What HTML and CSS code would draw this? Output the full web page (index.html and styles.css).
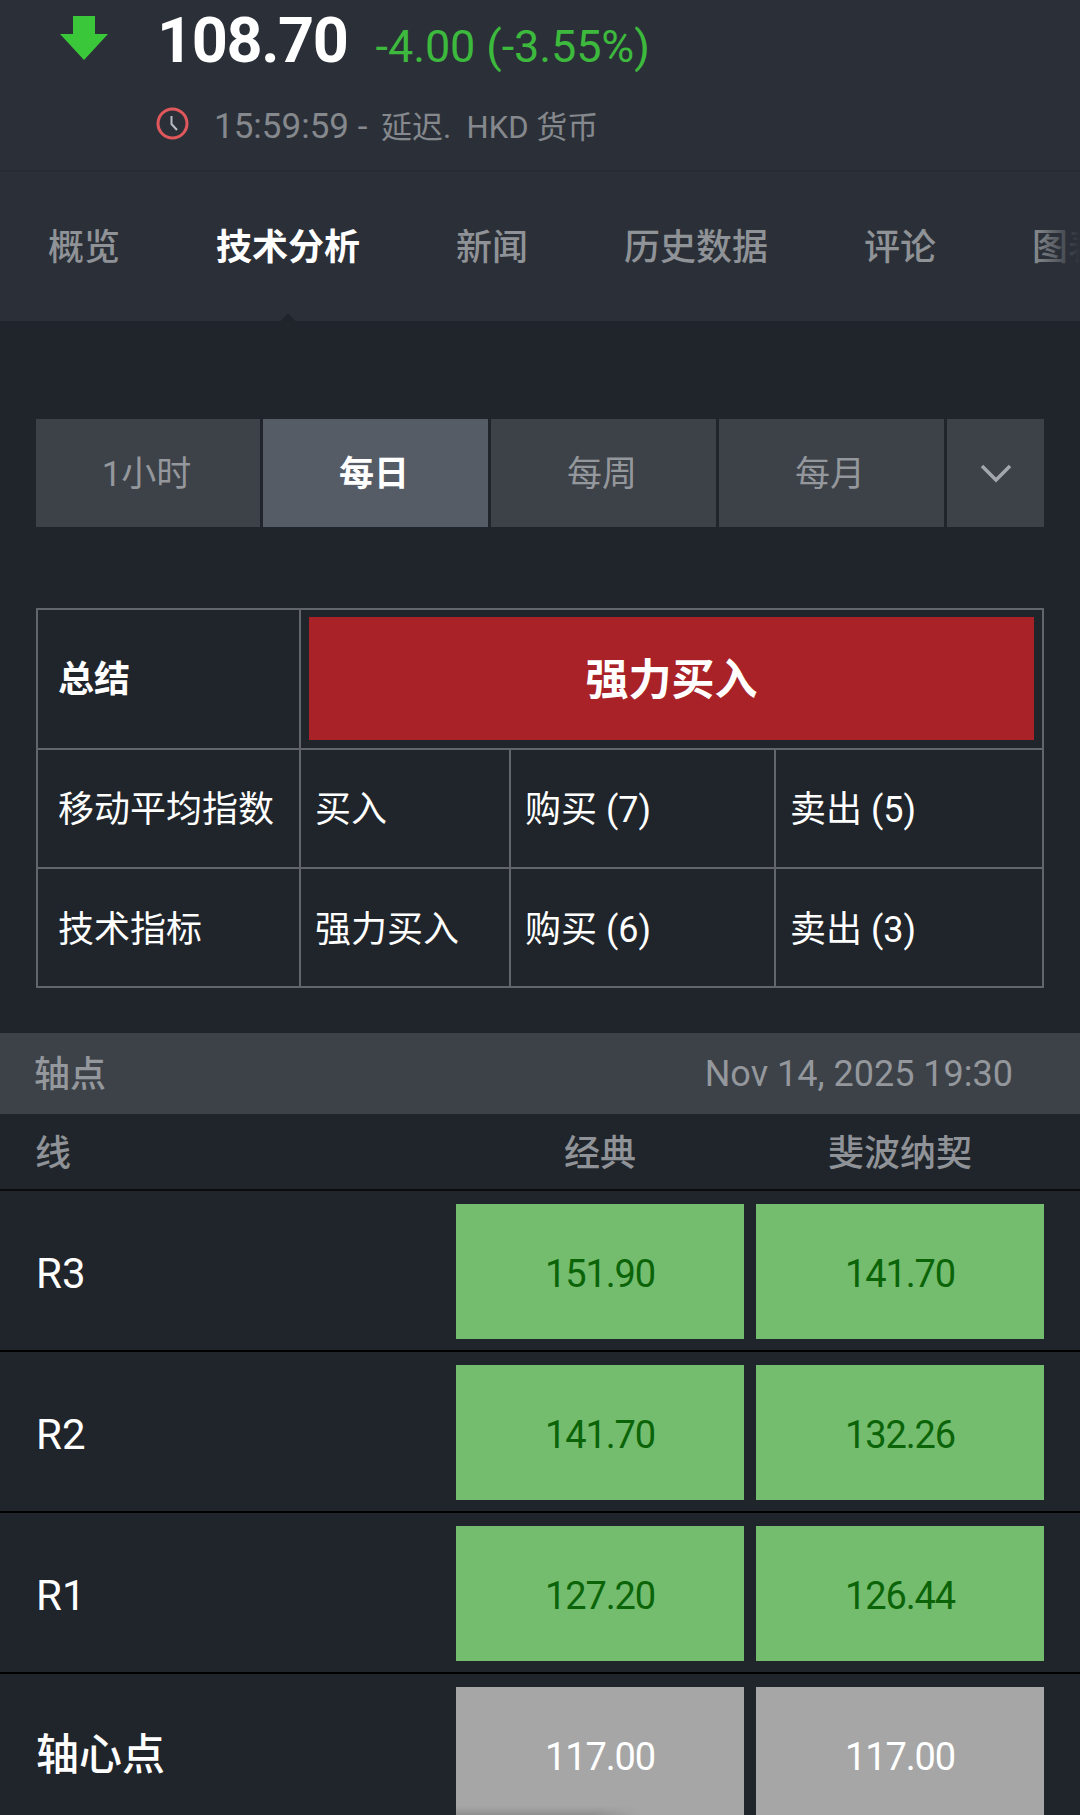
FILE: index.html
```html
<!DOCTYPE html>
<html lang="zh-CN">
<head>
    <meta charset="UTF-8"/>
    <title>技术分析</title>
    <link rel="stylesheet" href="styles.css">
</head>
<body>
<header class="quote">
    <div class="quote-main">
        <svg class="quote-arrow" viewBox="0 0 48 44">
            <path d="M13 0H35V18H48L24 44L0 18H13Z" fill="#3ac73a"/>
        </svg>
        <span class="quote-price">108.70</span>
        <span class="quote-change">-4.00 (-3.55%)</span>
    </div>
    <div class="quote-meta">
        <svg class="quote-clock" viewBox="0 0 33 33">
            <circle cx="16.5" cy="16.5" r="14.5" fill="none" stroke="#e0575c" stroke-width="3"/>
            <path d="M15.5 9V17L21 23" fill="none" stroke="#b9bcc0" stroke-width="2"/>
        </svg>
        <span class="quote-time">15:59:59 -&nbsp;</span>
        <span class="quote-delay">延迟.&nbsp;&nbsp;HKD 货币</span>
    </div>
</header>
<nav class="tabs">
    <a class="tab">概览</a>
    <a class="tab active">技术分析</a>
    <a class="tab">新闻</a>
    <a class="tab">历史数据</a>
    <a class="tab">评论</a>
    <a class="tab">图表</a>
    <div class="tabs-fade"></div>
</nav>
<main>
    <div class="periods">
        <a class="period">1小时</a>
        <a class="period active">每日</a>
        <a class="period">每周</a>
        <a class="period">每月</a>
        <a class="period period-more">
            <svg viewBox="0 0 32 20" width="32" height="20">
                <path d="M2 3L16 17L30 3" fill="none" stroke="#a3a7ac" stroke-width="3.5"/>
            </svg>
        </a>
    </div>
    <table class="summary">
        <colgroup>
            <col class="col-name">
            <col class="col-verdict">
            <col class="col-buy">
            <col>
        </colgroup>
        <tr class="summary-top">
            <th>总结</th>
            <td colspan="3" class="verdict-cell"><div class="verdict">强力买入</div></td>
        </tr>
        <tr>
            <td class="row-name">移动平均指数</td>
            <td>买入</td>
            <td>购买 (7)</td>
            <td>卖出 (5)</td>
        </tr>
        <tr>
            <td class="row-name">技术指标</td>
            <td>强力买入</td>
            <td>购买 (6)</td>
            <td>卖出 (3)</td>
        </tr>
    </table>
    <section class="pivot">
        <div class="pivot-title">
            <span>轴点</span>
            <span class="pivot-date">Nov 14, 2025 19:30</span>
        </div>
        <div class="pivot-head">
            <span>线</span>
            <span class="pivot-col">经典</span>
            <span class="pivot-col">斐波纳契</span>
        </div>
        <div class="pivot-row">
            <span class="pivot-name">R3</span>
            <span class="level up">151.90</span>
            <span class="level up">141.70</span>
        </div>
        <div class="pivot-row">
            <span class="pivot-name">R2</span>
            <span class="level up">141.70</span>
            <span class="level up">132.26</span>
        </div>
        <div class="pivot-row">
            <span class="pivot-name">R1</span>
            <span class="level up">127.20</span>
            <span class="level up">126.44</span>
        </div>
        <div class="pivot-row">
            <span class="pivot-name pivot-name-main">轴心点</span>
            <span class="level flat edge-shadow">117.00</span>
            <span class="level flat">117.00</span>
        </div>
    </section>
</main>
</body>
</html>
```

FILE: styles.css
```css
html, body {
    margin: 0;
    height: 1815px;
    overflow: hidden;
}

body {
    background-color: #1f252b;
    color: #fff;
    font-family: Roboto, "Noto Sans CJK SC", sans-serif;
}

.quote {
    box-sizing: border-box;
    height: 172px;
    padding: 0 0 0 60px;
    background-color: #2b3038;
    border-bottom: 2px solid #272c33;
}

.quote-main {
    display: flex;
    align-items: baseline;
    box-sizing: border-box;
    height: 76px;
    padding-top: 1px;
}

.quote-arrow {
    align-self: flex-start;
    width: 48px;
    height: 44px;
    margin-top: 15px;
    margin-right: 49px;
}

.quote-price {
    font-size: 63px;
    line-height: 80px;
    font-weight: 700;
    letter-spacing: -1.4px;
}

.quote-change {
    margin-left: 28px;
    font-size: 45px;
    letter-spacing: -0.1px;
    color: #3dba3d;
}

.quote-meta {
    display: flex;
    align-items: center;
    height: 46px;
    margin-top: 25px;
    margin-left: 96px;
    font-size: 31px;
    color: #85888d;
    white-space: pre;
}

.quote-time {
    margin-top: 4px;
    font-size: 35px;
}

.quote-delay {
    margin-left: 5px;
}

.quote-clock {
    width: 33px;
    height: 33px;
    margin-top: -1px;
    margin-right: 25px;
}

.tabs {
    position: relative;
    display: flex;
    align-items: center;
    box-sizing: border-box;
    height: 149px;
    padding-left: 48px;
    padding-bottom: 6px;
    background-color: #2b3038;
    overflow: hidden;
    white-space: nowrap;
    font-size: 36px;
    font-weight: 500;
    color: #8f9296;
}

.tab {
    position: relative;
    flex: none;
    margin-right: 96px;
}

.tab.active {
    color: #fff;
    font-weight: 700;
}

.tab.active::after {
    content: "";
    position: absolute;
    left: 50%;
    bottom: -56px;
    margin-left: -12px;
    border-left: 12px solid transparent;
    border-right: 12px solid transparent;
    border-bottom: 13px solid #1f252b;
}

.tabs-fade {
    position: absolute;
    top: 0;
    right: 0;
    bottom: 0;
    width: 50px;
    background: linear-gradient(to right, rgba(43, 48, 56, 0), #2b3038);
}

.periods {
    display: flex;
    gap: 3px;
    margin: 98px 36px 0 36px;
    height: 108px;
}

.period {
    display: flex;
    flex: 0 0 225px;
    box-sizing: border-box;
    align-items: center;
    justify-content: center;
    padding: 0 3px 5px 0;
    background-color: #3d4249;
    color: #94979c;
    font-size: 35px;
}

.period:first-child {
    flex-basis: 224px;
}

.period.active {
    background-color: #565c66;
    color: #fff;
    font-weight: 700;
}

.period-more {
    flex: 1;
    padding: 0;
}

.summary {
    box-sizing: border-box;
    width: 1008px;
    margin: 81px 0 0 36px;
    border-collapse: collapse;
    table-layout: fixed;
    font-size: 36px;
}

.summary th,
.summary td {
    box-sizing: border-box;
    height: 119px;
    padding: 0 0 5px 14px;
    border: 2px solid #62666c;
    text-align: left;
    font-weight: 400;
}

.summary tr:last-child td {
    padding-bottom: 3px;
}

.summary .col-name {
    width: 263px;
}

.summary .col-verdict {
    width: 210px;
}

.summary .col-buy {
    width: 265px;
}

.summary th,
.summary .row-name {
    padding-left: 20px;
}

.summary th {
    padding-bottom: 7px;
    font-weight: 700;
}

.summary-top th,
.summary-top td {
    height: 140px;
}

.summary .verdict-cell {
    padding: 5px 8px 7px;
}

.verdict {
    display: flex;
    align-items: center;
    justify-content: center;
    height: 123px;
    padding-bottom: 5px;
    box-sizing: border-box;
    background-color: #a92227;
    font-size: 43px;
    font-weight: 700;
}

.pivot {
    margin-top: 45px;
}

.pivot-title {
    display: flex;
    justify-content: space-between;
    align-items: center;
    box-sizing: border-box;
    height: 81px;
    padding: 0 67px 0 34px;
    background-color: #3d4249;
    color: #94979c;
    font-size: 36px;
    font-weight: 500;
}

.pivot-title > span:first-child {
    margin-bottom: 5px;
}

.pivot-date {
    font-weight: 400;
}

.pivot-head,
.pivot-row {
    display: grid;
    grid-template-columns: 288px 288px;
    column-gap: 12px;
    justify-content: end;
    align-items: center;
    padding-right: 36px;
}

.pivot-head {
    position: relative;
    box-sizing: border-box;
    height: 77px;
    padding-bottom: 3px;
    border-bottom: 2px solid #0a0c0e;
    color: #8f9296;
    font-size: 36px;
    font-weight: 500;
}

.pivot-head > span:first-child {
    position: absolute;
    left: 35px;
    margin-bottom: 4px;
}

.pivot-col {
    text-align: center;
}

.pivot-row {
    position: relative;
    height: 157px;
    padding-top: 2px;
    border-bottom: 2px solid #000;
}

.pivot-name {
    position: absolute;
    left: 36px;
    margin-top: 6px;
    font-size: 42px;
}

.pivot-name-main {
    margin-top: 0;
    margin-bottom: 5px;
    font-size: 43px;
    font-weight: 500;
}

.level {
    display: flex;
    position: relative;
    box-sizing: border-box;
    align-items: center;
    justify-content: center;
    height: 135px;
    padding-top: 5px;
    font-size: 38px;
    letter-spacing: -1.1px;
}

.level.up {
    background-color: #74bd6f;
    color: #0b6408;
}

.level.flat {
    background-color: #a6a6a6;
    color: #fff;
}

/* soft shadow that reaches in from the bottom of the window */
.edge-shadow::after {
    content: "";
    position: absolute;
    left: 0;
    bottom: 7px;
    width: 185px;
    height: 9px;
    background: linear-gradient(to bottom, rgba(0, 0, 0, 0), rgba(0, 0, 0, 0.13));
    -webkit-mask-image: linear-gradient(to right, #000 75%, transparent);
    mask-image: linear-gradient(to right, #000 75%, transparent);
}
```
